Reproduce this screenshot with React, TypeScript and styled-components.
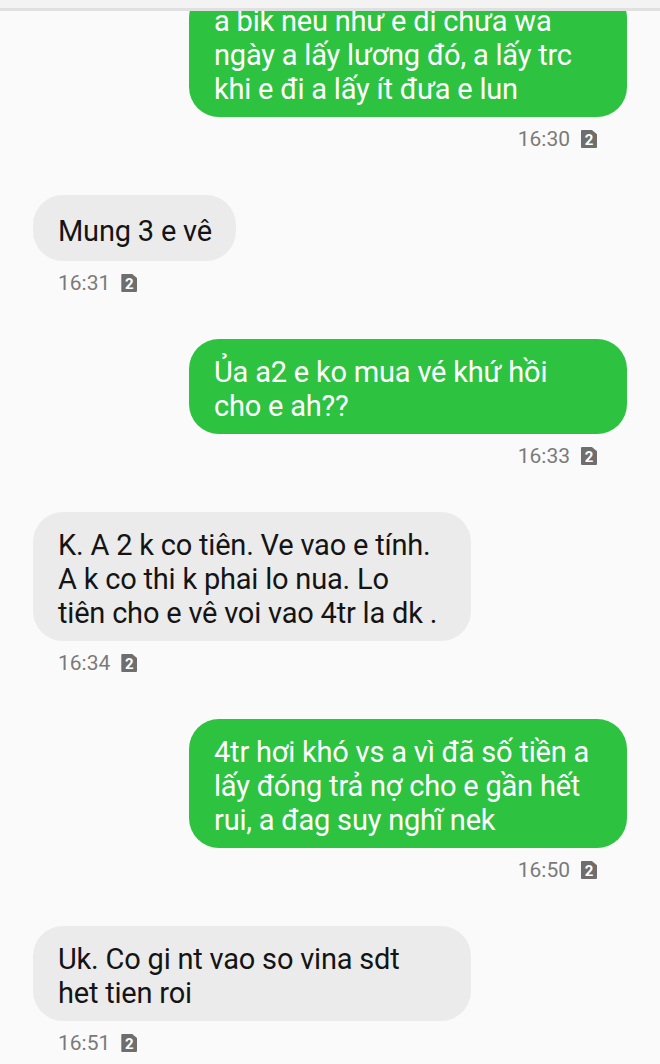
import React from "react";
import styled, { createGlobalStyle } from "styled-components";

const Global = createGlobalStyle`
  html, body { margin: 0; padding: 0; background: #fafafa; }
  body { font-family: Roboto, "Noto Sans", "Liberation Sans", sans-serif; }
`;

const Screen = styled.div`
  width: 660px;
  height: 1064px;
  overflow: hidden;
  display: flex;
  flex-direction: column;
  background: #fafafa;
`;

const TopBar = styled.div`
  height: 8px;
  flex: none;
  background: #f3f3f3;
  border-bottom: 3px solid #e0e0e0;
  position: relative;
  z-index: 2;
`;

const Thread = styled.div`
  flex: 1;
  overflow: hidden;
  display: flex;
  flex-direction: column;
  gap: 42px;
  padding: 0 33px;
`;

const Group = styled.div<{ $out: boolean; $first?: boolean }>`
  display: flex;
  flex-direction: column;
  align-items: ${(p) => (p.$out ? "flex-end" : "flex-start")};
  margin-top: ${(p) => (p.$first ? "-23px" : "0")};
`;

const Bubble = styled.div<{ $out: boolean; $full: boolean }>`
  box-sizing: border-box;
  width: ${(p) => (p.$full ? "438px" : "auto")};
  min-height: 66px;
  display: flex;
  flex-direction: column;
  justify-content: center;
  padding: 16px 24px 11px 25px;
  border-radius: 30px;
  background: ${(p) => (p.$out ? "#2dc341" : "#ebebeb")};
  color: ${(p) => (p.$out ? "#ffffff" : "#141414")};
  font-size: 29px;
  line-height: 34px;
  letter-spacing: -0.2px;
`;

const Line = styled.span`
  display: block;
  white-space: nowrap;
`;

const Meta = styled.div<{ $out: boolean }>`
  height: 28px;
  margin-top: 8px;
  display: flex;
  align-items: center;
  gap: 11px;
  padding: ${(p) => (p.$out ? "0 30px 0 0" : "0 0 0 25px")};
  color: #7a7a7a;
  font-size: 21px;
`;

const SimBadge = styled.span`
  display: inline-flex;
  align-items: center;
  justify-content: center;
  width: 16px;
  height: 18px;
  background: #6e6e6e;
  clip-path: polygon(0 0, 68% 0, 100% 24%, 100% 100%, 0 100%);
  border-radius: 1px;
  color: #fff;
  font-size: 15px;
  font-weight: 700;
  line-height: 1;
  padding-top: 2px;
  box-sizing: border-box;
`;

type Msg = { out: boolean; lines: string[]; time: string };

const messages: Msg[] = [
  {
    out: true,
    lines: ["a bik neu như e di chưa wa", "ngày a lấy lương đó, a lấy trc", "khi e đi a lấy ít đưa e lun"],
    time: "16:30",
  },
  { out: false, lines: ["Mung 3 e vê"], time: "16:31" },
  { out: true, lines: ["Ủa a2 e ko mua vé khứ hồi", "cho e ah??"], time: "16:33" },
  {
    out: false,
    lines: ["K. A 2 k co tiên. Ve vao e tính.", "A k co thi k phai lo nua. Lo", "tiên cho e vê voi vao 4tr la dk ."],
    time: "16:34",
  },
  {
    out: true,
    lines: ["4tr hơi khó vs a vì đã số tiền a", "lấy đóng trả nợ cho e gần hết", "rui, a đag suy nghĩ nek"],
    time: "16:50",
  },
  { out: false, lines: ["Uk. Co gi nt vao so vina sdt", "het tien roi"], time: "16:51" },
];

export default function App() {
  return (
    <Screen>
      <Global />
      <TopBar />
      <Thread>
        {messages.map((m, i) => (
          <Group key={i} $out={m.out} $first={i === 0}>
            <Bubble $out={m.out} $full={m.lines.length > 1}>
              {m.lines.map((l, j) => (
                <Line key={j}>{l}</Line>
              ))}
            </Bubble>
            <Meta $out={m.out}>
              <span>{m.time}</span>
              <SimBadge>2</SimBadge>
            </Meta>
          </Group>
        ))}
      </Thread>
    </Screen>
  );
}
